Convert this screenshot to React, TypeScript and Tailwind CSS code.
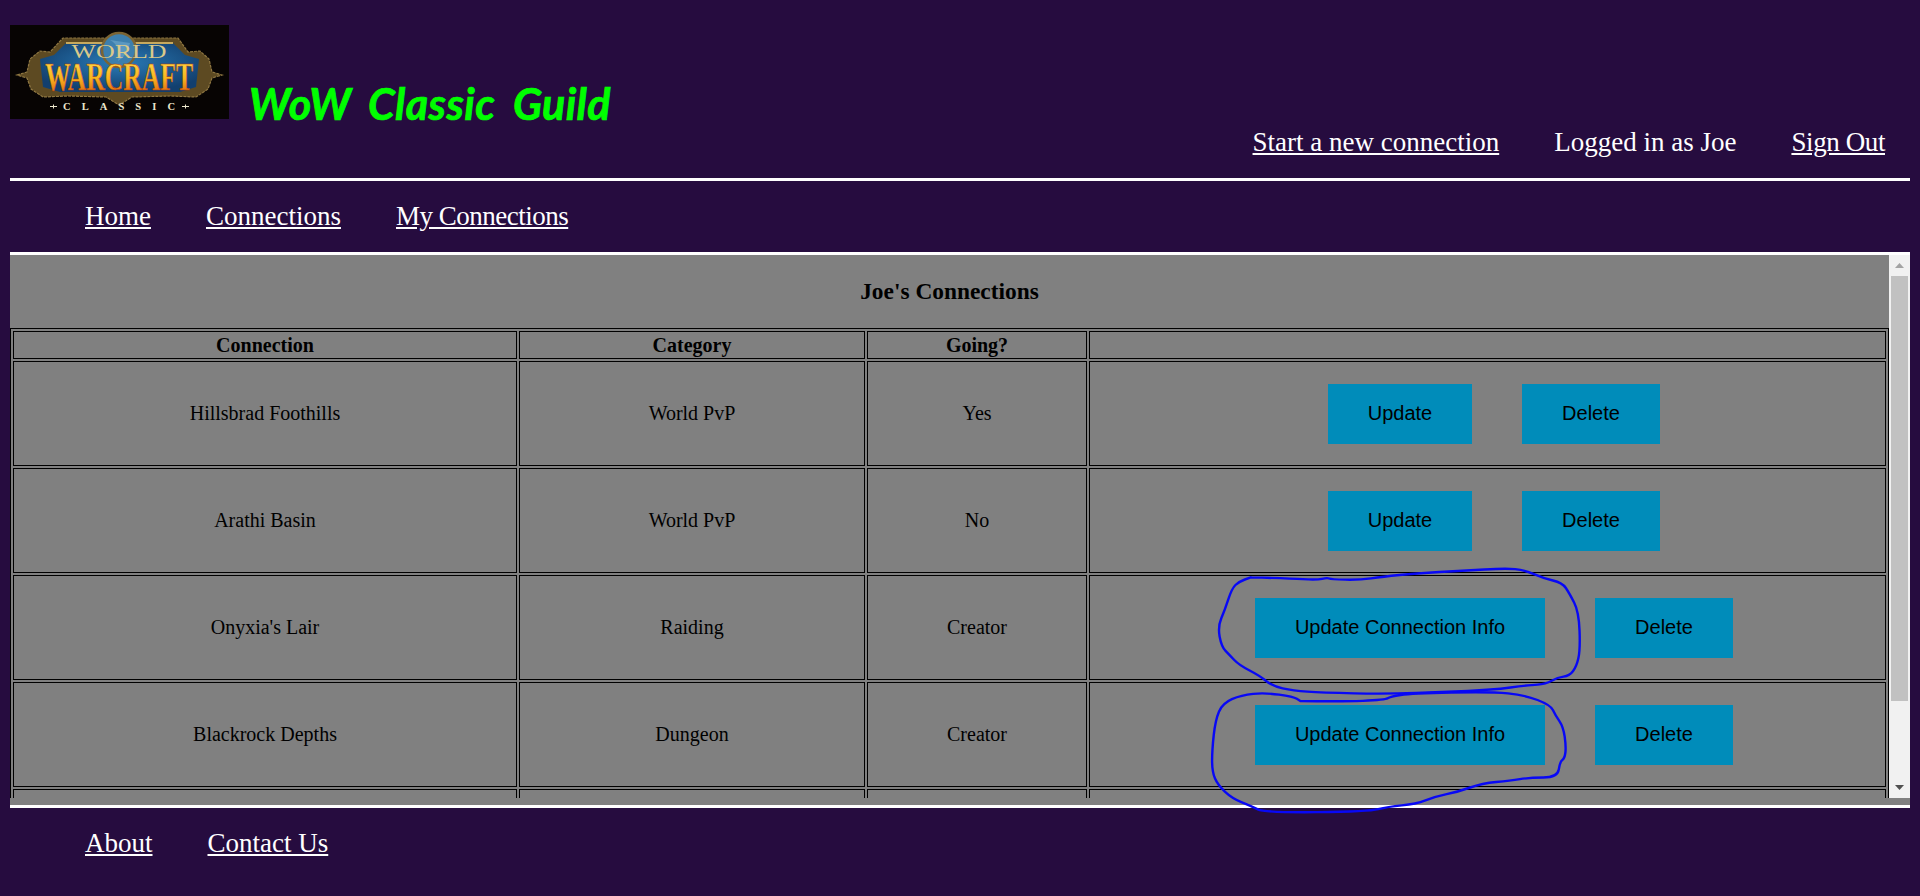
import React from "react";

const serif = "font-['Liberation_Serif',serif]";

const rows = [
  { name: "Hillsbrad Foothills", category: "World PvP", going: "Yes", label: "Update", width: "w-[144px]" },
  { name: "Arathi Basin", category: "World PvP", going: "No", label: "Update", width: "w-[144px]" },
  { name: "Onyxia's Lair", category: "Raiding", going: "Creator", label: "Update Connection Info", width: "w-[290px]" },
  { name: "Blackrock Depths", category: "Dungeon", going: "Creator", label: "Update Connection Info", width: "w-[290px]" },
];

const ring1 =
  "150,82 230,85 290,90 312,83 320,88 380,90 430,80 500,70 600,62 690,55 730,60 770,85 810,98 825,130 845,185 848,300 840,350 825,378 800,382 775,403 740,405 660,420 560,425 440,432 300,428 240,422 195,408 170,378 125,345 105,315 88,290 80,230 95,180 110,115 125,95 150,82";
const ring2 =
  "255,453 340,455 435,450 445,440 490,430 660,425 730,435 785,465 795,495 812,530 818,590 815,625 805,635 800,682 740,683 700,692 640,700 590,725 540,740 500,762 440,770 400,785 180,788 150,768 110,745 80,705 68,665 68,600 75,510 90,460 130,435 180,428 240,440 255,453";

// rounds the corners of a hand drawn line, points are in zoomed crop coordinates
const smooth = (points: string) => {
  const pts = points.split(" ").map((p) => p.split(",").map(Number));
  const mapped = pts.map(([x, y]) => [1180 + x * 0.472, 550 + y / 3]);
  let d = `M${mapped[0][0]} ${mapped[0][1]}`;
  for (let i = 1; i < mapped.length - 1; i++) {
    const mx = (mapped[i][0] + mapped[i + 1][0]) / 2;
    const my = (mapped[i][1] + mapped[i + 1][1]) / 2;
    d += ` Q${mapped[i][0]} ${mapped[i][1]} ${mx} ${my}`;
  }
  const last = mapped[mapped.length - 1];
  return `${d} L${last[0]} ${last[1]}`;
};

const Logo = () => (
  <svg width="219" height="94" viewBox="0 0 219 94" className="block shrink-0">
    <defs>
      <linearGradient id="wc" x1="0" y1="0" x2="0" y2="1">
        <stop offset="0" stopColor="#ffe65a" />
        <stop offset="0.55" stopColor="#f8b61e" />
        <stop offset="1" stopColor="#d4480f" />
      </linearGradient>
      <radialGradient id="band" cx="0.5" cy="0.4" r="0.6">
        <stop offset="0" stopColor="#2a7cb8" />
        <stop offset="1" stopColor="#123f6e" />
      </radialGradient>
    </defs>
    <rect width="219" height="94" fill="#070403" />
    {/* side ornaments and frame */}
    <path
      d="M7 50 L17 47 L20 34 L30 26 L40 27 L53 13 L168 13 L178 27 L190 26 L199 34 L202 47 L212 50 L202 53 L198 64 L186 72 L160 71 L122 72 L109 80 L96 72 L58 71 L33 72 L21 64 L17 53 Z"
      fill="#5d4a22"
      stroke="#8f7742"
      strokeWidth="1.2"
      strokeDasharray="3 1"
    />
    <path d="M30 34 L44 30 L56 18 L163 18 L175 30 L189 34 L186 62 L170 67 L50 67 L33 62 Z" fill="url(#band)" />
    <path d="M56 18 L163 18" stroke="#c7a95e" strokeWidth="2" />
    <circle cx="109" cy="25" r="17" fill="#3d7fae" stroke="#7b6434" strokeWidth="2.5" />
    <path d="M100 15 Q112 22 108 36 Q118 30 120 18" fill="#6fa9cc" opacity="0.6" />
    <text
      x="109"
      y="33"
      textAnchor="middle"
      textLength="95"
      lengthAdjust="spacingAndGlyphs"
      fontFamily="Liberation Serif, serif"
      fontSize="18"
      fill="#d9c98a"
    >
      WORLD
    </text>
    <text
      x="109"
      y="65"
      textAnchor="middle"
      textLength="148"
      lengthAdjust="spacingAndGlyphs"
      fontFamily="Liberation Serif, serif"
      fontWeight="700"
      fontSize="41"
      fill="url(#wc)"
      stroke="#a8320a"
      strokeWidth="0.5"
    >
      WARCRAFT
    </text>
    <text
      x="109"
      y="85"
      textAnchor="middle"
      textLength="112"
      fontFamily="Liberation Serif, serif"
      fontWeight="700"
      fontSize="10.5"
      fill="#ece7cd"
    >
      CLASSIC
    </text>
    <path d="M40 81.5 h7 M43.5 79.5 v4 M172 81.5 h7 M175.5 79.5 v4" stroke="#ece7cd" strokeWidth="1" />
  </svg>
);

const ScrollBar = () => (
  <div className="w-[21px] shrink-0 bg-[#f1f1f1] flex flex-col items-center">
    <div className="h-[21px] flex items-center justify-center">
      <svg width="9" height="5" viewBox="0 0 9 5">
        <path d="M4.5 0 L9 5 L0 5 Z" fill="#a3a3a3" />
      </svg>
    </div>
    <div className="w-[17px] h-[425px] bg-[#c1c1c1]" />
    <div className="flex-1 flex items-end justify-center pb-[8px]">
      <svg width="9" height="5" viewBox="0 0 9 5">
        <path d="M0 0 L9 0 L4.5 5 Z" fill="#505050" />
      </svg>
    </div>
  </div>
);

const App = () => {
  return (
    <div className={`relative h-[896px] overflow-hidden bg-[#260c3f] px-[10px] pt-[25px] ${serif} text-white text-[27px] leading-[31px]`}>
      <header className="flex h-[153px]">
        <Logo />
        <h1 className="ml-[20px] mt-[55px] h-fit font-['Lato',sans-serif] font-bold italic text-[43px] leading-[48px] text-[#00ff00] tracking-[0.4px] [word-spacing:8px] [-webkit-text-stroke:0.7px_#00ff00]">
          WoW Classic Guild
        </h1>
        <nav className="ml-auto mt-[102px] pr-[25px] h-fit flex gap-[55px]">
          <a className="underline">Start a new connection</a>
          <span>Logged in as Joe</span>
          <a className="underline tracking-[-0.4px]">Sign Out</a>
        </nav>
      </header>

      <nav className="border-t-[3px] border-white h-[74px] flex items-center gap-[55px] pl-[75px]">
        <a className="underline">Home</a>
        <a className="underline">Connections</a>
        <a className="underline tracking-[-0.5px]">My Connections</a>
      </nav>

      <main className="border-y-[3px] border-white bg-[#808080] pb-[7px] text-black text-[20px] leading-[23px]">
        <div className="flex h-[543px]">
          <div className="flex-1 overflow-hidden">
            <h2 className="h-[73px] flex items-center justify-center font-bold text-[23.4px]">Joe's Connections</h2>
            <table className="table-fixed w-[1879px] border border-black border-separate border-spacing-[2px]">
              <thead>
                <tr className="h-[28px] font-bold">
                  <th className="w-[504px] border border-black p-0">Connection</th>
                  <th className="w-[346px] border border-black p-0">Category</th>
                  <th className="w-[220px] border border-black p-0">Going?</th>
                  <th className="w-[797px] border border-black p-0"></th>
                </tr>
              </thead>
              <tbody>
                {rows.map((row) => (
                  <tr key={row.name} className="h-[105px] text-center">
                    <td className="border border-black p-0">{row.name}</td>
                    <td className="border border-black p-0">{row.category}</td>
                    <td className="border border-black p-0">{row.going}</td>
                    <td className="border border-black p-0">
                      <div className="flex justify-center gap-[50px] pl-[13px] font-['Liberation_Sans',sans-serif]">
                        <button className={`${row.width} h-[60px] bg-[#008cba]`}>{row.label}</button>
                        <button className="w-[138px] h-[60px] bg-[#008cba]">Delete</button>
                      </div>
                    </td>
                  </tr>
                ))}
                {/* next row is scrolled out of view, only its top edge shows */}
                <tr className="h-[105px]">
                  <td className="border border-black p-0"></td>
                  <td className="border border-black p-0"></td>
                  <td className="border border-black p-0"></td>
                  <td className="border border-black p-0"></td>
                </tr>
              </tbody>
            </table>
          </div>
          <ScrollBar />
        </div>
      </main>

      <footer className="flex gap-[55px] pl-[75px] pt-[20px]">
        <a className="underline">About</a>
        <a className="underline">Contact Us</a>
      </footer>

      {/* hand drawn marks over the buttons */}
      <svg className="absolute left-0 top-0 pointer-events-none" width="1920" height="896">
        <g fill="none" stroke="#0808f5" strokeWidth="2.4" strokeLinejoin="round" strokeLinecap="round">
          <path d={smooth(ring1)} />
          <path d={smooth(ring2)} />
        </g>
      </svg>
    </div>
  );
};

export default App;
